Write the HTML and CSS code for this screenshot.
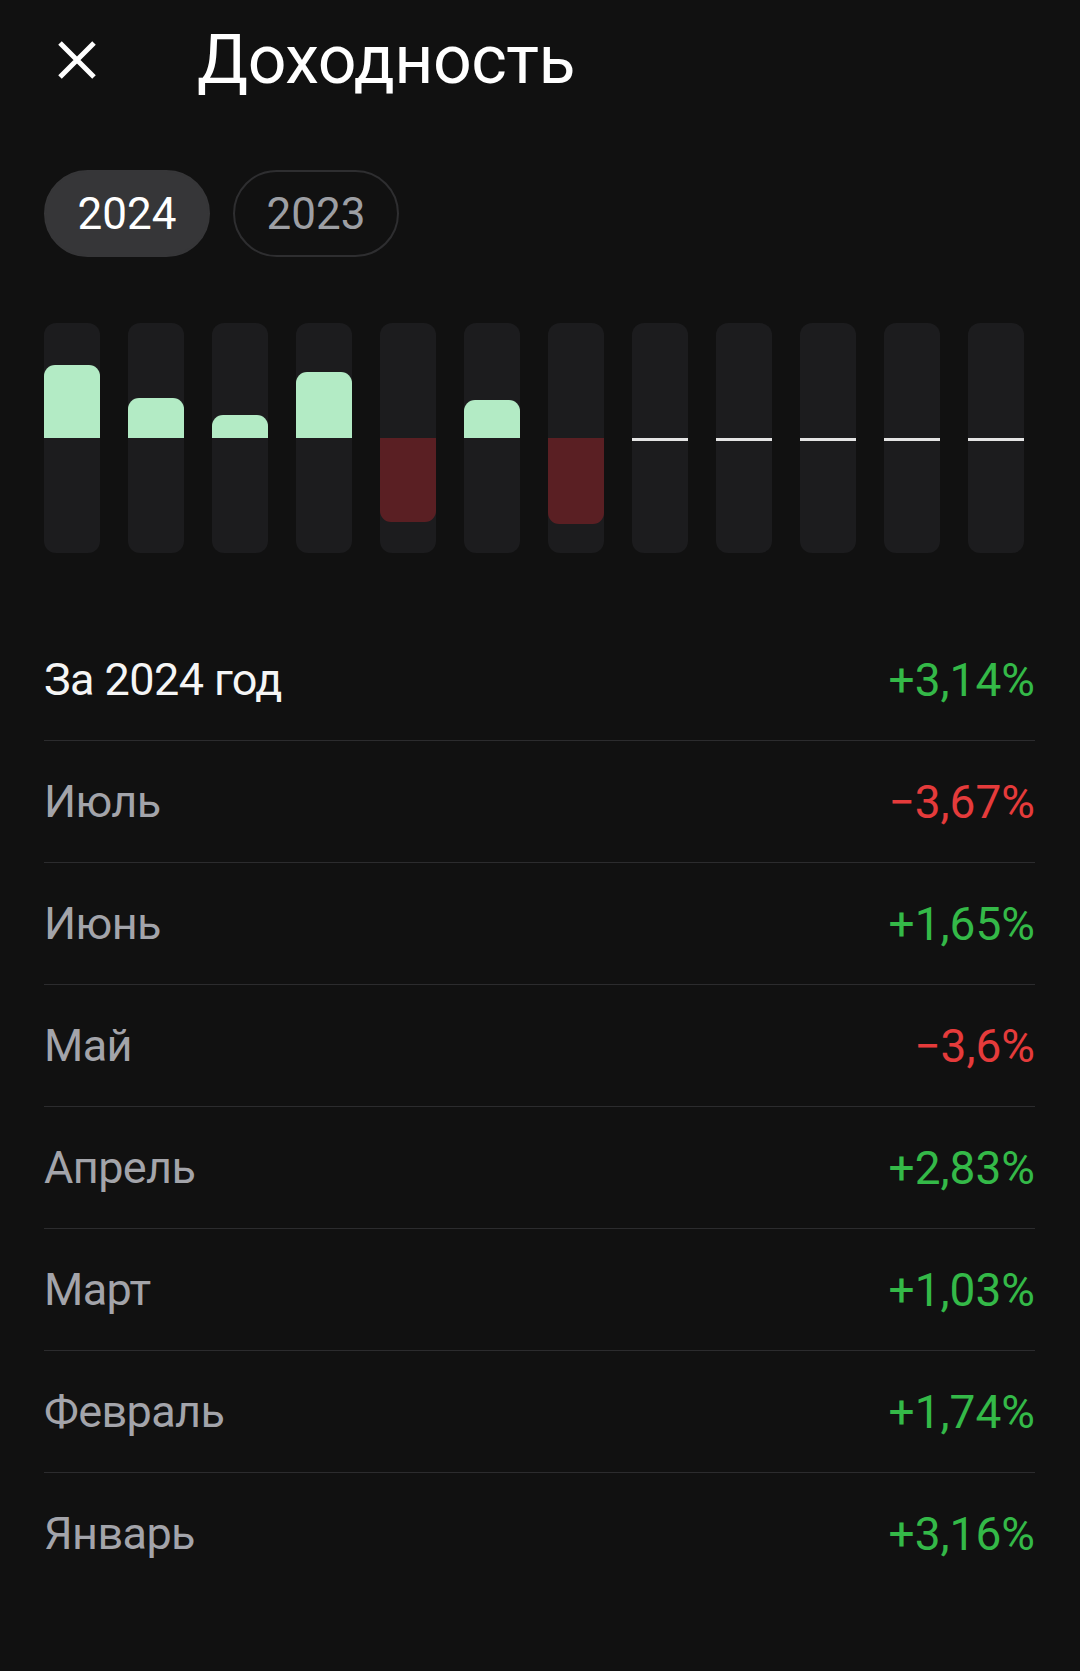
FILE: index.html
```html
<!DOCTYPE html>
<html lang="ru">
<head>
    <meta charset="UTF-8">
    <meta name="viewport" content="width=device-width, initial-scale=1.0">
    <title>Доходность</title>
    <link rel="stylesheet" href="styles.css">
</head>
<body>

<div class="page">
    <div class="header">
        <svg class="close" width="40" height="40" viewBox="0 0 40 40">
            <path d="M3 3 L37 37 M37 3 L3 37" stroke="#ffffff" stroke-width="5" fill="none"/>
        </svg>
        <h1>Доходность</h1>
    </div>

    <div class="years">
        <div class="pill active">2024</div>
        <div class="pill">2023</div>
    </div>

    <!-- columns: one per month, fill height in px from zero line -->
    <div class="chart">
        <div class="bar"><div class="up"><div class="fill pos" style="height: 73px"></div></div><div class="down"></div></div>
        <div class="bar"><div class="up"><div class="fill pos" style="height: 40px"></div></div><div class="down"></div></div>
        <div class="bar"><div class="up"><div class="fill pos" style="height: 23px"></div></div><div class="down"></div></div>
        <div class="bar"><div class="up"><div class="fill pos" style="height: 66px"></div></div><div class="down"></div></div>
        <div class="bar"><div class="up"></div><div class="down"><div class="fill neg" style="height: 84px"></div></div></div>
        <div class="bar"><div class="up"><div class="fill pos" style="height: 38px"></div></div><div class="down"></div></div>
        <div class="bar"><div class="up"></div><div class="down"><div class="fill neg" style="height: 86px"></div></div></div>
        <div class="bar empty"><div class="up"></div><div class="down"></div></div>
        <div class="bar empty"><div class="up"></div><div class="down"></div></div>
        <div class="bar empty"><div class="up"></div><div class="down"></div></div>
        <div class="bar empty"><div class="up"></div><div class="down"></div></div>
        <div class="bar empty"><div class="up"></div><div class="down"></div></div>
    </div>

    <div class="list">
        <div class="row total">
            <span class="label">За 2024 год</span>
            <span class="value green">+3,14%</span>
        </div>
        <div class="row">
            <span class="label">Июль</span>
            <span class="value red">−3,67%</span>
        </div>
        <div class="row">
            <span class="label">Июнь</span>
            <span class="value green">+1,65%</span>
        </div>
        <div class="row">
            <span class="label">Май</span>
            <span class="value red">−3,6%</span>
        </div>
        <div class="row">
            <span class="label">Апрель</span>
            <span class="value green">+2,83%</span>
        </div>
        <div class="row">
            <span class="label">Март</span>
            <span class="value green">+1,03%</span>
        </div>
        <div class="row">
            <span class="label">Февраль</span>
            <span class="value green">+1,74%</span>
        </div>
        <div class="row">
            <span class="label">Январь</span>
            <span class="value green">+3,16%</span>
        </div>
    </div>
</div>

</body>
</html>
```

FILE: styles.css
```css
body {
    margin: 0;
    background-color: #111111;
    font-family: Roboto, "Noto Sans", sans-serif;
    color: #ffffff;
}
.page {
    padding: 0 45px 0 44px;
}
.header {
    display: flex;
    align-items: center;
    height: 120px;
    padding-left: 13px;
}
.close {
    flex: none;
}
h1 {
    margin: 0 0 0 100px;
    font-size: 68px;
    font-weight: 400;
    letter-spacing: -0.5px;
}
.years {
    display: flex;
    gap: 23px;
    margin-top: 50px;
}
.pill {
    box-sizing: border-box;
    width: 166px;
    height: 87px;
    border-radius: 44px;
    border: 2px solid #2e2e30;
    display: flex;
    align-items: center;
    justify-content: center;
    font-size: 44px;
    color: #9d9fa4;
}
.pill.active {
    background: #363638;
    border-color: #363638;
    color: #ffffff;
}
.chart {
    display: flex;
    gap: 28px;
    margin-top: 66px;
}
.bar {
    width: 56px;
    height: 230px;
    background: #1c1c1e;
    border-radius: 12px;
    display: flex;
    flex-direction: column;
}
.up, .down {
    flex: 1;
    display: flex;
}
.up {
    align-items: flex-end;
}
.down {
    align-items: flex-start;
}
.fill {
    width: 100%;
}
.fill.pos {
    background: #b3ebc5;
    border-radius: 11px 11px 0 0;
}
.fill.neg {
    background: #5a1f23;
    border-radius: 0 0 11px 11px;
}
.bar.empty .up {
    border-bottom: 3px solid #e4e4e4;
    margin-bottom: -1px;
}
.bar.empty .down {
    margin-top: -2px;
}
.list {
    margin-top: 66px;
}
.row {
    display: flex;
    justify-content: space-between;
    align-items: center;
    height: 121px;
    border-bottom: 1px solid #2c2c2e;
}
.row:last-child {
    border-bottom: none;
}
.label {
    font-size: 45px;
    letter-spacing: -0.6px;
    color: #a3a4aa;
}
.total .label {
    color: #f5f5f5;
}
.value {
    font-size: 46px;
}
.green {
    color: #34b948;
}
.red {
    color: #e53b3b;
}
```
